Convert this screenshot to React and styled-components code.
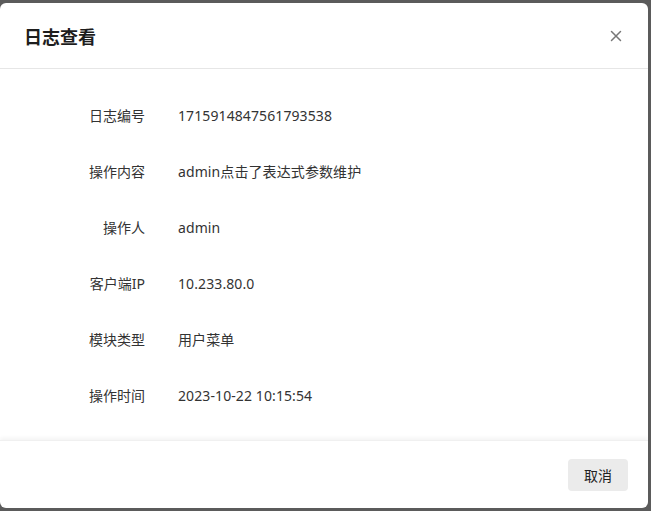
import React from "react";
import styled, { createGlobalStyle } from "styled-components";

const Global = createGlobalStyle`
  html, body { margin: 0; padding: 0; background: #5b5b5b; }
  body { font-family: "Noto Sans", "Noto Sans CJK SC", sans-serif; width: 651px; height: 511px; overflow: hidden; }
`;

const Overlay = styled.div`
  width: 651px;
  height: 511px;
  padding-top: 3px;
  box-sizing: border-box;
`;

const Dialog = styled.div`
  width: 648px;
  height: 505px;
  background: #fff;
  border-radius: 6px;
  display: flex;
  flex-direction: column;
  overflow: hidden;
`;

const Header = styled.div`
  height: 66px;
  box-sizing: border-box;
  border-bottom: 1px solid #e6e6e6;
  display: flex;
  align-items: center;
  justify-content: space-between;
  padding: 0 24px 0 24px;
`;

const Title = styled.div`
  font-size: 18px;
  font-weight: 700;
  color: #1d1d1d;
`;

const Close = styled.button`
  border: none;
  background: none;
  padding: 0;
  width: 16px;
  height: 16px;
  display: flex;
  align-items: center;
  justify-content: center;
  color: #777;
  cursor: pointer;
`;

const Body = styled.div`
  flex: 1;
  padding: 18px 0 16px;
  display: flex;
  flex-direction: column;
`;

const Row = styled.div`
  height: 56px;
  display: grid;
  grid-template-columns: 145px 1fr;
  column-gap: 33px;
  align-items: center;
  font-size: 14px;
  color: #333;
`;

const Label = styled.div`
  text-align: right;
`;

const Value = styled.div`
  letter-spacing: 0.1px;
`;

const Footer = styled.div`
  height: 68px;
  box-sizing: border-box;
  box-shadow: 0 -2px 4px rgba(0, 0, 0, 0.05);
  border-top: 1px solid #f0f0f0;
  display: flex;
  align-items: center;
  justify-content: flex-end;
  padding: 0 20px;
`;

const Button = styled.button`
  width: 60px;
  height: 32px;
  border: none;
  border-radius: 4px;
  background: #ebebeb;
  color: #222;
  font-family: inherit;
  font-size: 14px;
  cursor: pointer;
`;

const rows = [
  ["日志编号", "1715914847561793538"],
  ["操作内容", "admin点击了表达式参数维护"],
  ["操作人", "admin"],
  ["客户端IP", "10.233.80.0"],
  ["模块类型", "用户菜单"],
  ["操作时间", "2023-10-22 10:15:54"],
];

export default function App() {
  return (
    <Overlay>
      <Global />
      <Dialog>
        <Header>
          <Title>日志查看</Title>
          <Close aria-label="close">
            <svg width="12" height="12" viewBox="0 0 12 12">
              <path d="M1.5 1.5 L10.5 10.5 M10.5 1.5 L1.5 10.5" stroke="currentColor" strokeWidth="1.5" strokeLinecap="round" />
            </svg>
          </Close>
        </Header>
        <Body>
          {rows.map(([l, v]) => (
            <Row key={l}>
              <Label>{l}</Label>
              <Value>{v}</Value>
            </Row>
          ))}
        </Body>
        <Footer>
          <Button>取消</Button>
        </Footer>
      </Dialog>
    </Overlay>
  );
}
